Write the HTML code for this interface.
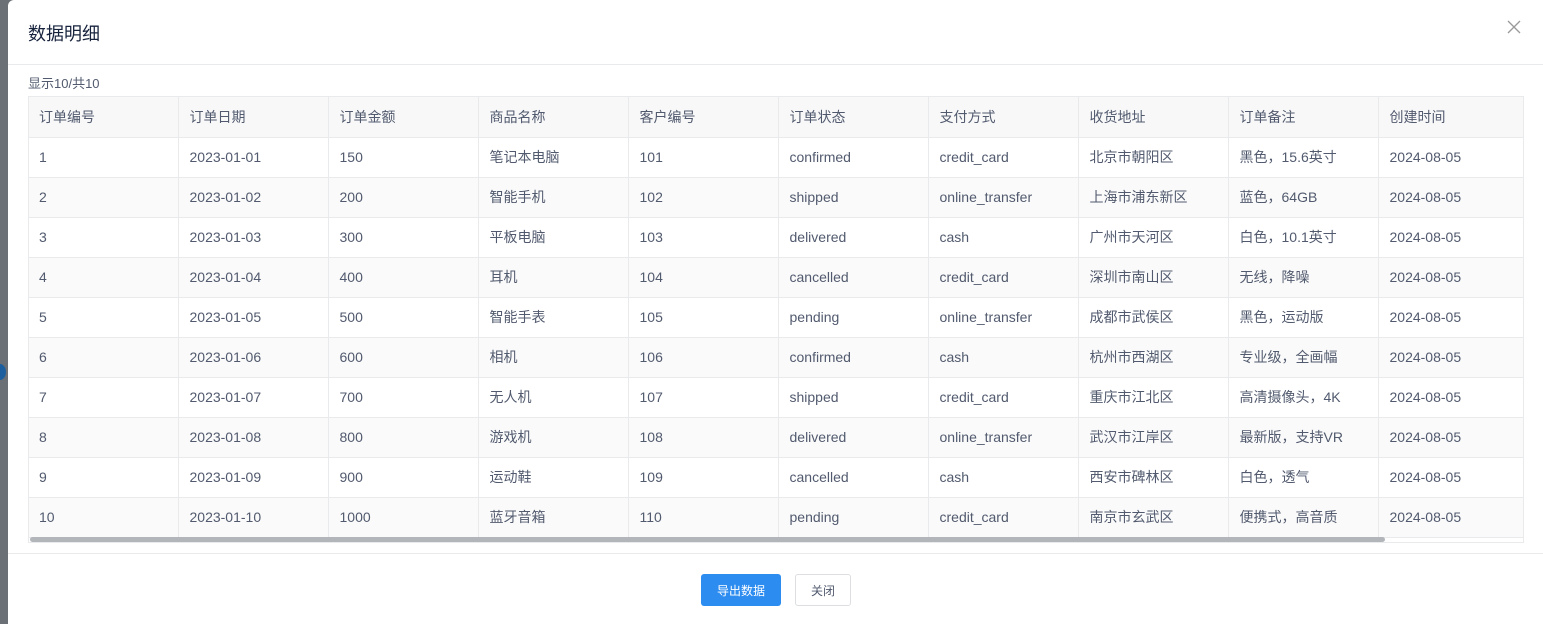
<!DOCTYPE html>
<html><head><meta charset="utf-8">
<style>
*{margin:0;padding:0;box-sizing:border-box}
html,body{width:1543px;height:624px;overflow:hidden;background:#6b7077;font-family:"Liberation Sans","Noto Sans CJK SC",sans-serif}
.dot{position:absolute;left:-6px;top:364px;width:12px;height:16px;border-radius:50%;background:#1d5f9e}
.modal{position:absolute;left:8px;top:0;width:1540px;height:624px;background:#fff;border-radius:6px 0 0 0}
.title{position:absolute;left:20px;top:20px;font-size:18px;color:#17233d}
.close{position:absolute;left:1497px;top:18px}
.hr1{position:absolute;left:0;top:64px;width:100%;height:1px;background:#e8eaec}
.count{position:absolute;left:20px;top:73px;font-size:13px;color:#515a6e}
.tbl{position:absolute;left:20px;top:96px;width:1496px;height:447px;border:1px solid #e8eaec;overflow:hidden}
table{border-collapse:collapse;table-layout:fixed;width:1495px}
td,th{height:40px;border-right:1px solid #e8eaec;border-bottom:1px solid #e8eaec;padding-left:11px;text-align:left;font-size:14px;color:#515a6e;font-weight:normal;white-space:nowrap}
td:first-child,th:first-child{padding-left:10px}
th{background:#f8f8f9;color:#515a6e}
tr.s td{background:#fafafa}
.scroll{position:absolute;left:1px;top:440px;width:1355px;height:5px;background:#b2b5ba;border-radius:3px}
.hr2{position:absolute;left:0;top:553px;width:100%;height:1px;background:#e8eaec}
.btn{position:absolute;top:574px;height:32px;font-size:12px;display:flex;align-items:center;justify-content:center;border-radius:3px}
.b1{left:693px;width:80px;background:#2d8cf0;color:#fff}
.b2{left:787px;width:56px;border:1px solid #dcdee2;color:#515a6e;background:#fff}
</style></head><body>
<div class="dot"></div>
<div class="modal">
<div class="title">数据明细</div>
<svg class="close" width="18" height="18" viewBox="0 0 18 18"><path d="M3 3L15 15M15 3L3 15" stroke="#999" stroke-width="1.3"/></svg>
<div class="hr1"></div>
<div class="count">显示10/共10</div>
<div class="tbl">
<table>
<colgroup><col style="width:149px"><col style="width:150px"><col style="width:150px"><col style="width:150px"><col style="width:150px"><col style="width:150px"><col style="width:150px"><col style="width:150px"><col style="width:150px"><col style="width:146px"></colgroup>
<tr><th>订单编号</th><th>订单日期</th><th>订单金额</th><th>商品名称</th><th>客户编号</th><th>订单状态</th><th>支付方式</th><th>收货地址</th><th>订单备注</th><th>创建时间</th></tr>
<tr><td>1</td><td>2023-01-01</td><td>150</td><td>笔记本电脑</td><td>101</td><td>confirmed</td><td>credit_card</td><td>北京市朝阳区</td><td>黑色，15.6英寸</td><td>2024-08-05</td></tr>
<tr class="s"><td>2</td><td>2023-01-02</td><td>200</td><td>智能手机</td><td>102</td><td>shipped</td><td>online_transfer</td><td>上海市浦东新区</td><td>蓝色，64GB</td><td>2024-08-05</td></tr>
<tr><td>3</td><td>2023-01-03</td><td>300</td><td>平板电脑</td><td>103</td><td>delivered</td><td>cash</td><td>广州市天河区</td><td>白色，10.1英寸</td><td>2024-08-05</td></tr>
<tr class="s"><td>4</td><td>2023-01-04</td><td>400</td><td>耳机</td><td>104</td><td>cancelled</td><td>credit_card</td><td>深圳市南山区</td><td>无线，降噪</td><td>2024-08-05</td></tr>
<tr><td>5</td><td>2023-01-05</td><td>500</td><td>智能手表</td><td>105</td><td>pending</td><td>online_transfer</td><td>成都市武侯区</td><td>黑色，运动版</td><td>2024-08-05</td></tr>
<tr class="s"><td>6</td><td>2023-01-06</td><td>600</td><td>相机</td><td>106</td><td>confirmed</td><td>cash</td><td>杭州市西湖区</td><td>专业级，全画幅</td><td>2024-08-05</td></tr>
<tr><td>7</td><td>2023-01-07</td><td>700</td><td>无人机</td><td>107</td><td>shipped</td><td>credit_card</td><td>重庆市江北区</td><td>高清摄像头，4K</td><td>2024-08-05</td></tr>
<tr class="s"><td>8</td><td>2023-01-08</td><td>800</td><td>游戏机</td><td>108</td><td>delivered</td><td>online_transfer</td><td>武汉市江岸区</td><td>最新版，支持VR</td><td>2024-08-05</td></tr>
<tr><td>9</td><td>2023-01-09</td><td>900</td><td>运动鞋</td><td>109</td><td>cancelled</td><td>cash</td><td>西安市碑林区</td><td>白色，透气</td><td>2024-08-05</td></tr>
<tr class="s"><td>10</td><td>2023-01-10</td><td>1000</td><td>蓝牙音箱</td><td>110</td><td>pending</td><td>credit_card</td><td>南京市玄武区</td><td>便携式，高音质</td><td>2024-08-05</td></tr>
</table>
<div class="scroll"></div>
</div>
<div class="hr2"></div>
<div class="btn b1">导出数据</div>
<div class="btn b2">关闭</div>
</div>
</body></html>
